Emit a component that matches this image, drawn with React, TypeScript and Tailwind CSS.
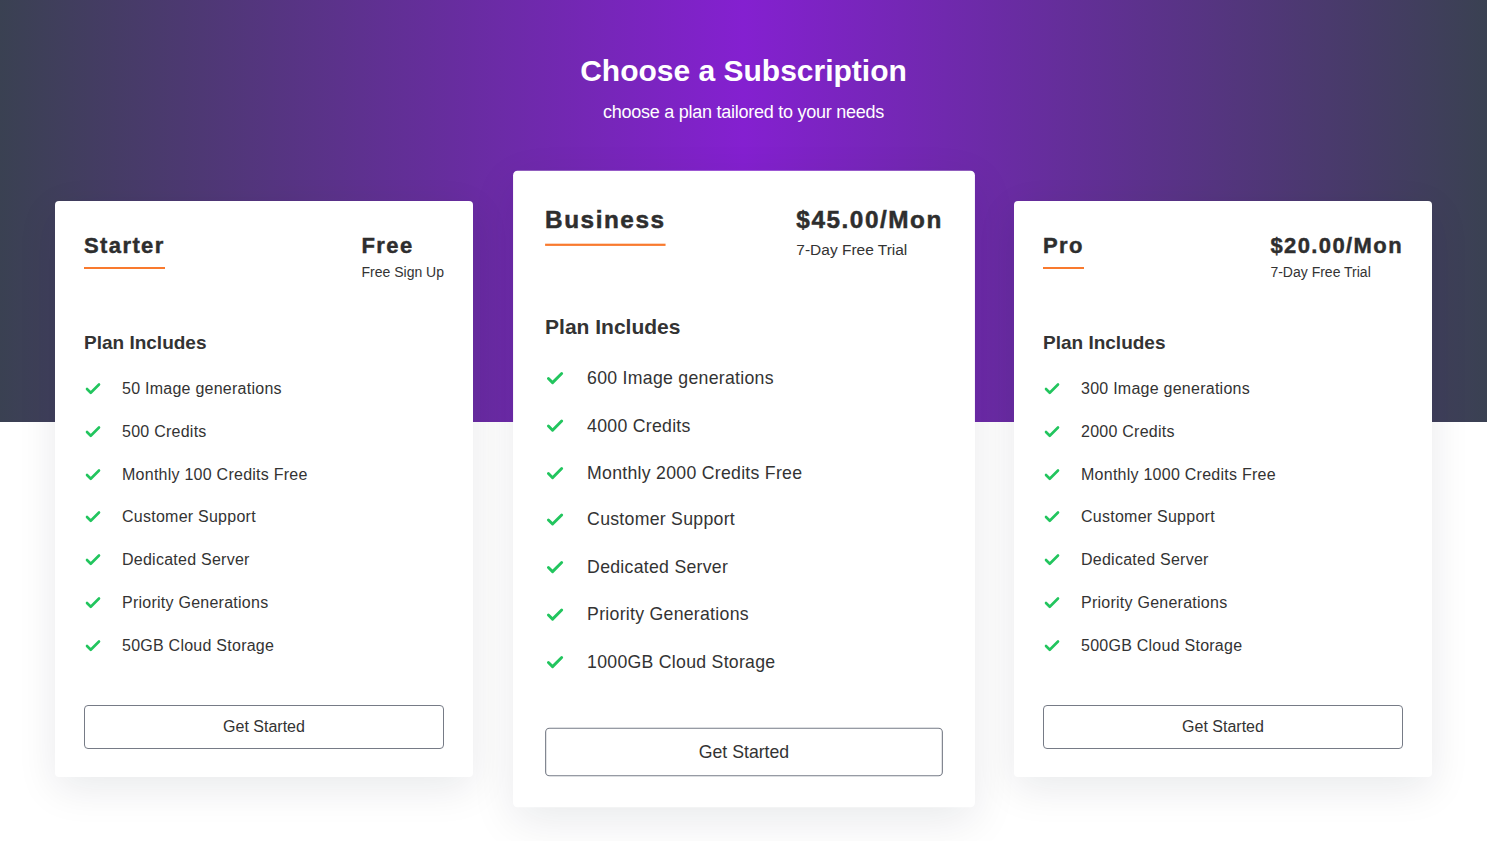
import { Check } from 'lucide-react';

// plan data
interface Plan {
    name: string;
    price: string;
    note: string;
    features: string[];
    featured?: boolean;
}

const plans: Plan[] = [
    {
        name: 'Starter',
        price: 'Free',
        note: 'Free Sign Up',
        features: [
            '50 Image generations',
            '500 Credits',
            'Monthly 100 Credits Free',
            'Customer Support',
            'Dedicated Server',
            'Priority Generations',
            '50GB Cloud Storage',
        ],
    },
    {
        name: 'Business',
        price: '$45.00/Mon',
        note: '7-Day Free Trial',
        featured: true,
        features: [
            '600 Image generations',
            '4000 Credits',
            'Monthly 2000 Credits Free',
            'Customer Support',
            'Dedicated Server',
            'Priority Generations',
            '1000GB Cloud Storage',
        ],
    },
    {
        name: 'Pro',
        price: '$20.00/Mon',
        note: '7-Day Free Trial',
        features: [
            '300 Image generations',
            '2000 Credits',
            'Monthly 1000 Credits Free',
            'Customer Support',
            'Dedicated Server',
            'Priority Generations',
            '500GB Cloud Storage',
        ],
    },
];

function PlanCard({ plan }: { plan: Plan }) {
    return (
        <div
            className={`w-[418px] shrink-0 rounded-[4px] bg-white px-[29px] pt-[32px] pb-[28px] shadow-[0_12px_40px_rgba(15,23,42,0.09)] ${plan.featured ? 'scale-[1.105]' : ''}`}
        >
            {/* header */}
            <div className="flex items-start justify-between">
                <div className="w-fit">
                    <h3 className="text-[22px] leading-[26px] font-bold tracking-[1.4px] text-[#2e2e2e] [-webkit-text-stroke:0.45px_#2e2e2e]">
                        {plan.name}
                    </h3>
                    <div className="mt-2 h-[2px] bg-[#f97a2e]" />
                </div>
                <div>
                    <div className="text-[22px] leading-[26px] font-bold tracking-[1.4px] text-[#2e2e2e] [-webkit-text-stroke:0.45px_#2e2e2e]">
                        {plan.price}
                    </div>
                    <div className="mt-[3px] text-[14px] leading-[20px] text-[#333]">{plan.note}</div>
                </div>
            </div>

            <h4 className="mt-[49px] text-[19px] leading-[24px] font-bold text-[#333]">Plan Includes</h4>

            <ul className="mt-[22px] flex flex-col gap-[18.83px]">
                {plan.features.map(f => (
                    <li key={f} className="flex h-6 items-center gap-[20px]">
                        <Check className="h-[20px] w-[18px] shrink-0 text-[#22c55e]" strokeWidth={3.5} />
                        <span className="text-[16px] tracking-[0.25px] text-[#333]">{f}</span>
                    </li>
                ))}
            </ul>

            <button className="mt-[47px] flex h-[44px] w-full items-center justify-center rounded-[4px] border border-[#767b86] bg-white text-[16px] text-[#333]">
                Get Started
            </button>
        </div>
    );
}

export default function App() {
    return (
        <div className="min-h-[841px] bg-white font-['Liberation_Sans',Arial,sans-serif]">
            <div className="h-[422px] bg-[linear-gradient(to_right,#3a4152,#8420d0,#3a4152)] pt-[53px] text-center text-white">
                <h1 className="text-[30px] leading-[36px] font-bold">Choose a Subscription</h1>
                <p className="mt-[11px] text-[18px] leading-[24px] tracking-[-0.25px]">
                    choose a plan tailored to your needs
                </p>
            </div>

            <div className="-mt-[221px] flex items-center justify-center gap-[61.5px]">
                {plans.map(p => (
                    <PlanCard key={p.name} plan={p} />
                ))}
            </div>
        </div>
    );
}
